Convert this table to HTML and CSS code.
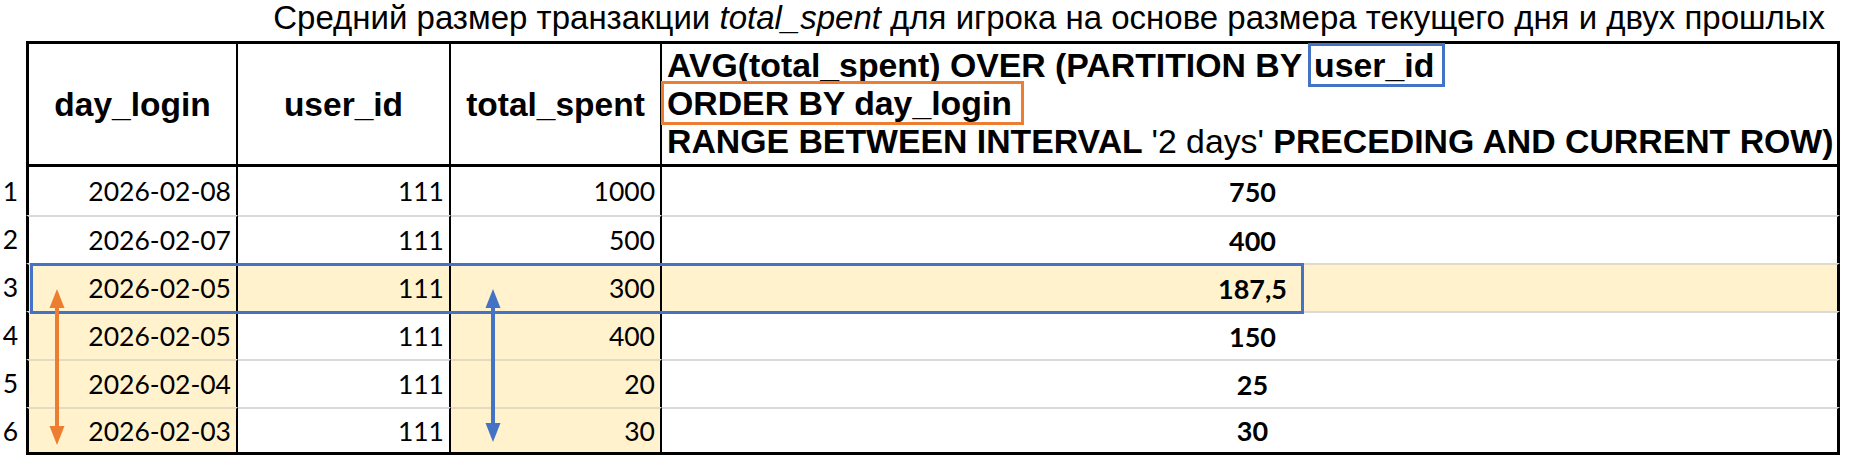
FILE: index.html
```html
<!DOCTYPE html>
<html lang="ru">
<head>
<meta charset="utf-8">
<title>RANGE BETWEEN INTERVAL</title>
<link rel="stylesheet" href="styles.css">
</head>
<body>
<div class="title">Средний размер транзакции <i>total_spent</i> для игрока на основе размера текущего дня и двух прошлых</div>
<div class="sheet">
  <div class="grid">
    <div class="num head"></div>
    <div class="cell hcell c1">day_login</div>
    <div class="cell hcell">user_id</div>
    <div class="cell hcell">total_spent</div>
    <div class="cell hcell sql c4">
      <div class="sql-line">AVG(total_spent) OVER (PARTITION BY <span class="box-blue">user_id</span></div>
      <div class="sql-line"><span class="box-orange">ORDER BY day_login</span></div>
      <div class="sql-line">RANGE BETWEEN INTERVAL <span class="reg">'2 days'</span> PRECEDING AND CURRENT ROW)</div>
    </div>

    <div class="num">1</div>
    <div class="cell d c1 first">2026-02-08</div>
    <div class="cell d first">111</div>
    <div class="cell d first">1000</div>
    <div class="cell d res c4 first">750</div>

    <div class="num">2</div>
    <div class="cell d c1">2026-02-07</div>
    <div class="cell d">111</div>
    <div class="cell d">500</div>
    <div class="cell d res c4">400</div>

    <div class="num">3</div>
    <div class="cell d c1 hl">2026-02-05</div>
    <div class="cell d hl">111</div>
    <div class="cell d hl">300</div>
    <div class="cell d res c4 hl">187,5</div>

    <div class="num">4</div>
    <div class="cell d c1 hl">2026-02-05</div>
    <div class="cell d">111</div>
    <div class="cell d hl">400</div>
    <div class="cell d res c4">150</div>

    <div class="num">5</div>
    <div class="cell d c1 hl">2026-02-04</div>
    <div class="cell d">111</div>
    <div class="cell d hl">20</div>
    <div class="cell d res c4">25</div>

    <div class="num">6</div>
    <div class="cell d c1 hl last">2026-02-03</div>
    <div class="cell d last">111</div>
    <div class="cell d hl last">30</div>
    <div class="cell d res c4 last">30</div>
  </div>

  <div class="row-box"></div>
  <svg class="arrow arrow-orange" width="20" height="156" viewBox="0 0 20 156">
    <line x1="10" y1="14" x2="10" y2="142" stroke="#ED7D31" stroke-width="4"/>
    <polygon points="10,0 2.5,19 17.5,19" fill="#ED7D31"/>
    <polygon points="10,156 2.5,137 17.5,137" fill="#ED7D31"/>
  </svg>
  <svg class="arrow arrow-blue" width="20" height="153" viewBox="0 0 20 153">
    <line x1="10" y1="14" x2="10" y2="139" stroke="#4472C4" stroke-width="4"/>
    <polygon points="10,0 2.5,19 17.5,19" fill="#4472C4"/>
    <polygon points="10,153 2.5,134 17.5,134" fill="#4472C4"/>
  </svg>
</div>
</body>
</html>
```

FILE: styles.css
```css
html, body {
  margin: 0;
  padding: 0;
  background: #ffffff;
}

body {
  width: 1858px;
  height: 468px;
  overflow: hidden;
  font-family: "Liberation Sans", Arial, sans-serif;
  color: #000;
}

.title {
  height: 41px;
  line-height: 35px;
  font-size: 33px;
  text-align: right;
  padding-right: 33px;
  white-space: nowrap;
}

.sheet {
  position: relative;
}

.grid {
  display: grid;
  grid-template-columns: 26px 212px 213px 211px 1178px;
  grid-template-rows: 126px repeat(6, 48px);
}

.cell {
  box-sizing: border-box;
  border-right: 2px solid #000;
  display: flex;
  align-items: center;
}

.c1 {
  border-left: 3px solid #000;
}

.c4 {
  border-right: 3px solid #000;
}

.hcell {
  border-top: 3px solid #000;
  border-bottom: 3px solid #000;
  font-weight: bold;
  font-size: 33.5px;
  justify-content: center;
  padding-top: 2px;
}

.sql {
  flex-direction: column;
  align-items: flex-start;
  justify-content: flex-start;
  padding: 2px 0 0 5px;
  font-size: 33.8px;
}

.sql-line {
  line-height: 38px;
  white-space: nowrap;
}

.reg {
  font-weight: normal;
}

.box-blue {
  border: 3px solid #4472C4;
  padding: 0 8px 0 3px;
  margin-left: -3px;
}

.box-orange {
  border: 3px solid #ED7D31;
  padding: 0 9px 0 3px;
  margin-left: -6px;
}

.num {
  font-family: Lato, "Open Sans", sans-serif;
  font-size: 26.5px;
  display: flex;
  align-items: center;
  justify-content: flex-end;
  padding-right: 8px;
}

.d {
  font-family: Lato, "Open Sans", sans-serif;
  font-size: 26.5px;
  justify-content: flex-end;
  padding-right: 5px;
  border-top: 2px solid #d9d9d9;
}

.d.first {
  border-top: none;
}

.d.last {
  border-bottom: 3px solid #000;
}

.hl {
  background: #FFF2CC;
  border-top-color: #e3dac4;
}

.res {
  font-weight: bold;
  font-size: 27px;
  justify-content: center;
  padding-right: 0;
  padding-left: 6px;
}

.row-box {
  position: absolute;
  left: 30px;
  top: 222px;
  width: 1274px;
  height: 51px;
  box-sizing: border-box;
  border: 3px solid #4472C4;
}

.arrow {
  position: absolute;
  top: 248px;
}

.arrow-orange {
  left: 47px;
}

.arrow-blue {
  left: 483px;
}
```
